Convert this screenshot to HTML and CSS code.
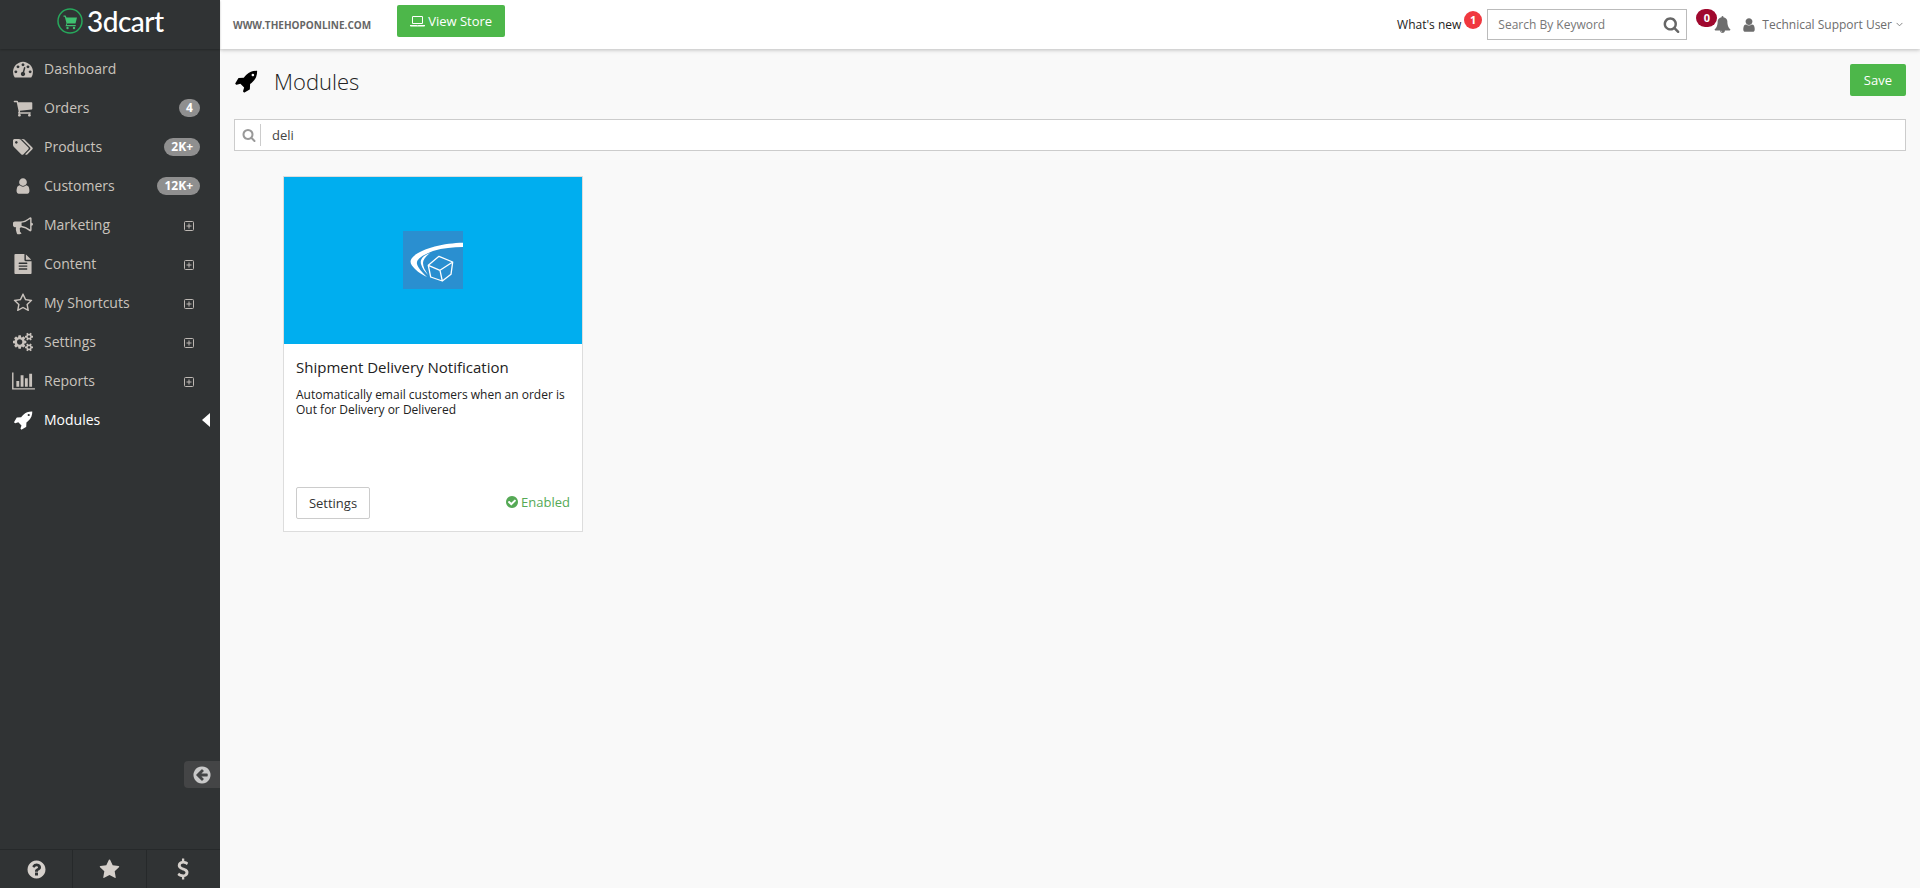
FILE: index.html
```html
<!DOCTYPE html>
<html lang="en">
<head>
<meta charset="utf-8">
<title>Modules</title>
<link rel="stylesheet" href="styles.css">
</head>
<body>
<svg class="sprite" xmlns="http://www.w3.org/2000/svg">
  <symbol id="i-dashboard" viewBox="0 0 1792 1792"><path d="M384 1152q0-53-37.500-90.500t-90.500-37.500-90.500 37.500-37.500 90.500 37.500 90.500 90.500 37.500 90.500-37.500 37.500-90.500zm192-448q0-53-37.500-90.500t-90.500-37.500-90.500 37.500-37.500 90.500 37.500 90.500 90.500 37.500 90.500-37.500 37.500-90.500zm428 481l101-382q6-26-7.500-48.500t-38.500-29.500-48 6.500-30 39.500l-101 382q-60 5-107 43.500t-63 98.500q-20 77 20 146t117 89 146-20 89-117q16-60-6-117t-72-91zm660-33q0-53-37.500-90.500t-90.500-37.500-90.500 37.500-37.500 90.500 37.500 90.500 90.500 37.500 90.500-37.500 37.500-90.500zm-640-640q0-53-37.500-90.500t-90.500-37.500-90.500 37.500-37.500 90.500 37.500 90.500 90.500 37.500 90.500-37.500 37.500-90.500zm448 192q0-53-37.500-90.500t-90.500-37.500-90.500 37.500-37.500 90.500 37.500 90.500 90.500 37.500 90.500-37.500 37.500-90.500zm320 448q0 261-141 483-19 29-54 29h-1402q-35 0-54-29-141-221-141-483 0-182 71-348t191-286 286-191 348-71 348 71 286 191 191 286 71 348z"/></symbol>
  <symbol id="i-cart" viewBox="0 0 1792 1792"><path d="M704 1536q0 52-38 90t-90 38-90-38-38-90 38-90 90-38 90 38 38 90zm896 0q0 52-38 90t-90 38-90-38-38-90 38-90 90-38 90 38 38 90zm128-1088v512q0 24-16.500 42.500t-40.500 20.500l-1044 122q13 60 13 70 0 16-24 64h920q26 0 45 19t19 45-19 45-45 19h-1024q-26 0-45-19t-19-45q0-11 8-31.500t16-36 21.500-40 15.500-29.500l-177-823h-204q-26 0-45-19t-19-45 19-45 45-19h256q16 0 28.500 6.500t19.500 15.500 13 24.500 8 26 5.500 29.500 4.500 26h1201q26 0 45 19t19 45z"/></symbol>
  <symbol id="i-tags" viewBox="0 0 1920 1792"><path d="M448 448q0-53-37.500-90.500t-90.500-37.500-90.500 37.500-37.500 90.500 37.500 90.500 90.500 37.500 90.500-37.500 37.500-90.500zm1067 576q0 53-37 90l-491 492q-39 37-91 37-53 0-90-37l-715-716q-38-37-64.500-101t-26.500-117v-416q0-52 38-90t90-38h416q53 0 117 26.500t102 64.500l715 714q37 39 37 91zm384 0q0 53-37 90l-491 492q-39 37-91 37-36 0-59-14t-53-45l470-470q37-37 37-90 0-52-37-91l-715-714q-38-38-102-64.500t-117-26.500h224q53 0 117 26.500t102 64.500l715 714q37 39 37 91z"/></symbol>
  <symbol id="i-user" viewBox="0 0 1792 1792"><path d="M1536 1399q0 109-62.500 187t-150.500 78h-854q-88 0-150.500-78t-62.500-187q0-85 8.500-160.500t31.500-152 58.500-131 94-89 134.500-34.500q131 128 313 128t313-128q76 0 134.500 34.500t94 89 58.500 131 31.500 152 8.500 160.500zm-256-887q0 159-112.500 271.500t-271.500 112.500-271.500-112.500-112.500-271.500 112.500-271.500 271.500-112.500 271.500 112.500 112.500 271.500z"/></symbol>
  <symbol id="i-bullhorn" viewBox="0 0 1792 1792"><path d="M1664 704q53 0 90.500 37.500t37.500 90.500-37.500 90.500-90.500 37.500v384q0 52-38 90t-90 38q-417-347-812-380-58 19-91 66t-31 100.500 40 92.500q-20 33-23 65.500t6 58 33.500 55 48 50 61.500 50.500q-29 58-111.500 83t-168.500 11.500-132-55.500q-7-23-29.500-87.500t-32-94.500-23-89-15-101 3.500-98.500 22-110.500h-122q-66 0-113-47t-47-113v-192q0-66 47-113t113-47h480q435 0 896-384 52 0 90 38t38 90v384zm-128 604v-954q-394 302-768 343v270q377 42 768 341z"/></symbol>
  <symbol id="i-file" viewBox="0 0 1792 1792"><path d="M1596 476q14 14 28 36h-472v-472q22 14 36 28zm-476 164h544v1056q0 40-28 68t-68 28h-1344q-40 0-68-28t-28-68v-1600q0-40 28-68t68-28h800v544q0 40 28 68t68 28zm160 736v-64q0-14-9-23t-23-9h-704q-14 0-23 9t-9 23v64q0 14 9 23t23 9h704q14 0 23-9t9-23zm0-256v-64q0-14-9-23t-23-9h-704q-14 0-23 9t-9 23v64q0 14 9 23t23 9h704q14 0 23-9t9-23zm0-256v-64q0-14-9-23t-23-9h-704q-14 0-23 9t-9 23v64q0 14 9 23t23 9h704q14 0 23-9t9-23z"/></symbol>
  <symbol id="i-star-o" viewBox="0 0 1792 1792"><path d="M1201 1004l306-297-422-62-189-382-189 382-422 62 306 297-73 421 378-199 377 199zm527-357q0 22-26 48l-363 354 86 500q1 7 1 20 0 50-41 50-19 0-40-12l-449-236-449 236q-22 12-40 12-21 0-31.500-14.500t-10.500-35.500q0-6 2-20l86-500-364-354q-25-27-25-48 0-37 56-46l502-73 225-455q19-41 49-41t49 41l225 455 502 73q56 9 56 46z"/></symbol>
  <symbol id="i-star" viewBox="0 0 1792 1792"><path d="M1728 647q0 22-26 48l-363 354 86 500q1 7 1 20 0 21-10.500 35.500t-30.500 14.500q-19 0-40-12l-449-236-449 236q-22 12-40 12-21 0-31.500-14.500t-10.500-35.500q0-6 2-20l86-500-364-354q-25-27-25-48 0-37 56-46l502-73 225-455q19-41 49-41t49 41l225 455 502 73q56 9 56 46z"/></symbol>
  <symbol id="i-cogs" viewBox="0 0 1920 1792"><path d="M896 896q0-106-75-181t-181-75-181 75-75 181 75 181 181 75 181-75 75-181zm768 512q0-52-38-90t-90-38-90 38-38 90q0 53 37.500 90.500t90.500 37.500 90.500-37.500 37.500-90.500zm0-1024q0-52-38-90t-90-38-90 38-38 90q0 53 37.500 90.500t90.500 37.500 90.500-37.500 37.500-90.500zm-384 421v185q0 10-7 19.500t-16 10.500l-155 24q-11 35-32 76 34 48 90 115 7 11 7 20 0 12-7 19-23 30-82.500 89.500t-78.500 59.500q-11 0-21-7l-115-90q-37 19-77 31-11 108-23 155-7 24-30 24h-186q-11 0-20-7.500t-10-17.500l-23-153q-34-10-75-31l-118 89q-7 7-20 7-11 0-21-8-144-133-144-160 0-9 7-19 10-14 41-53t47-61q-23-44-35-82l-152-24q-10-1-17-9.500t-7-19.500v-185q0-10 7-19.500t16-10.500l155-24q11-35 32-76-34-48-90-115-7-11-7-20 0-12 7-20 22-30 82-89t79-59q11 0 21 7l115 90q34-18 77-32 11-108 23-154 7-24 30-24h186q11 0 20 7.500t10 17.500l23 153q34 10 75 31l118-89q8-7 20-7 11 0 21 8 144 133 144 160 0 8-7 19-12 16-42 54t-45 60q23 48 34 82l152 23q10 2 17 10.500t7 19.500zm640 533v140q0 16-149 31-12 27-30 52 51 113 51 138 0 4-4 7-122 71-124 71-8 0-46-47t-52-68q-20 2-30 2t-30-2q-14 21-52 68t-46 47q-2 0-124-71-4-3-4-7 0-25 51-138-18-25-30-52-149-15-149-31v-140q0-16 149-31 13-29 30-52-51-113-51-138 0-4 4-7 4-2 35-20t59-34 30-16q8 0 46 46.500t52 67.500q20-2 30-2t30 2q51-71 92-112l6-2q4 0 124 70 4 3 4 7 0 25-51 138 17 23 30 52 149 15 149 31zm0-1024v140q0 16-149 31-12 27-30 52 51 113 51 138 0 4-4 7-122 71-124 71-8 0-46-47t-52-68q-20 2-30 2t-30-2q-14 21-52 68t-46 47q-2 0-124-71-4-3-4-7 0-25 51-138-18-25-30-52-149-15-149-31v-140q0-16 149-31 13-29 30-52-51-113-51-138 0-4 4-7 4-2 35-20t59-34 30-16q8 0 46 46.500t52 67.500q20-2 30-2t30 2q51-71 92-112l6-2q4 0 124 70 4 3 4 7 0 25-51 138 17 23 30 52 149 15 149 31z"/></symbol>
  <symbol id="i-chart" viewBox="0 0 2048 1792"><path d="M640 896v512h-256v-512h256zm384-512v1024h-256v-1024h256zm1024 1152v128h-2048v-1536h128v1408h1920zm-640-896v768h-256v-768h256zm384-384v1152h-256v-1152h256z"/></symbol>
  <symbol id="i-rocket" viewBox="0 0 1792 1792"><path d="M1504 448q0-40-28-68t-68-28-68 28-28 68 28 68 68 28 68-28 28-68zm224-288q0 249-75.500 430.500t-253.500 360.500q-81 80-195 176l-20 379q-2 16-16 26l-384 224q-7 4-16 4-12 0-23-9l-64-64q-13-14-8-32l85-276-281-281-276 85q-3 1-9 1-14 0-23-9l-64-64q-17-19-5-39l224-384q10-14 26-16l379-20q96-114 176-195 188-187 358-258t431-71q14 0 24 9.500t10 22.500z"/></symbol>
  <symbol id="i-plus" viewBox="0 0 10 10"><path fill="none" stroke="currentColor" d="M1.500.5h7a1 1 0 0 1 1 1v7a1 1 0 0 1-1 1h-7a1 1 0 0 1-1-1v-7a1 1 0 0 1 1-1zM5 2.500v5M2.500 5h5"/></symbol>
  <symbol id="i-search" viewBox="0 0 1792 1792"><path d="M1216 832q0-185-131.500-316.500t-316.500-131.500-316.500 131.500-131.500 316.500 131.500 316.500 316.500 131.500 316.500-131.500 131.500-316.500zm512 832q0 52-38 90t-90 38q-54 0-90-38l-343-342q-179 124-399 124-143 0-273.500-55.500t-225-150-150-225-55.500-273.500 55.500-273.500 150-225 225-150 273.500-55.500 273.500 55.500 225 150 150 225 55.500 273.500q0 220-124 399l343 343q37 37 37 90z"/></symbol>
  <symbol id="i-bell" viewBox="0 0 1792 1792"><path d="M912 1696q0-16-16-16-59 0-101.500-42.500t-42.500-101.500q0-16-16-16t-16 16q0 73 51.500 124.500t124.500 51.500q16 0 16-16zm816-288q0 52-38 90t-90 38h-448q0 106-75 181t-181 75-181-75-75-181h-448q-52 0-90-38t-38-90q50-42 91-88t85-119.500 74.500-158.500 50-206 19.500-260q0-152 117-282.500t307-158.500q-8-19-8-39 0-40 28-68t68-28 68 28 28 68q0 20-8 39 190 28 307 158.500t117 282.500q0 139 19.500 260t50 206 74.500 158.500 85 119.500 91 88z"/></symbol>
  <symbol id="i-check" viewBox="0 0 1792 1792"><path d="M1412 734q0-28-18-46l-91-90q-19-19-45-19t-45 19l-408 407-226-226q-19-19-45-19t-45 19l-91 90q-18 18-18 46 0 27 18 45l362 362q19 19 45 19 27 0 46-19l543-543q18-18 18-45zm252 162q0 209-103 385.500t-279.500 279.500-385.500 103-385.500-103-279.500-279.500-103-385.500 103-385.500 279.500-279.500 385.500-103 385.500 103 279.500 279.500 103 385.500z"/></symbol>
  <symbol id="i-question" viewBox="0 0 1792 1792"><path d="M1024 1376v-192q0-14-9-23t-23-9h-192q-14 0-23 9t-9 23v192q0 14 9 23t23 9h192q14 0 23-9t9-23zm256-672q0-88-55.500-163t-138.500-116-170-41q-243 0-371 213-15 24 8 42l132 100q7 6 19 6 16 0 25-12 53-68 86-92 34-24 86-24 48 0 85.500 26t37.500 59q0 38-20 61t-68 45q-63 28-115.500 86.500t-52.500 125.500v36q0 14 9 23t23 9h192q14 0 23-9t9-23q0-19 21.500-49.500t54.500-49.500q32-18 49-28.500t46-35 44.500-48 28-60.500 12.500-81zm384 192q0 209-103 385.500t-279.500 279.500-385.500 103-385.500-103-279.500-279.500-103-385.500 103-385.500 279.500-279.500 385.500-103 385.500 103 279.500 279.500 103 385.500z"/></symbol>
  <symbol id="i-back" viewBox="0 0 1792 1792"><path d="M1408 960v-128q0-26-19-45t-45-19h-502l189-189q19-19 19-45t-19-45l-91-91q-18-18-45-18t-45 18l-362 362-91 91q-18 18-18 45t18 45l91 91 362 362q18 18 45 18t45-18l91-91q18-18 18-45t-18-45l-189-189h502q26 0 45-19t19-45zm256-64q0 209-103 385.500t-279.500 279.500-385.500 103-385.500-103-279.500-279.500-103-385.500 103-385.500 279.500-279.500 385.500-103 385.500 103 279.500 279.500 103 385.500z"/></symbol>
  <symbol id="i-dollar" viewBox="0 0 1024 1792"><path d="M978 1185q0 153-99.500 263.500t-258.500 136.500v175q0 14-9 23t-23 9h-135q-13 0-22.500-9.500t-9.500-22.500v-175q-66-9-127.500-31t-101.500-44.500-74-48-46.500-37.500-17.500-18q-17-21-2-41l103-135q7-10 23-12 15-2 24 9l2 2q113 99 243 125 37 8 74 8 81 0 142.500-43t61.500-122q0-28-15-53t-33.500-42-58.500-37.500-66-32-80-32.500q-39-16-61.500-25t-61.500-26.500-62.500-31-56.500-35.500-53.500-42.500-43.500-49-35.500-58-21-66.500-8.500-78q0-138 98-242t255-134v-180q0-13 9.500-22.500t22.500-9.500h135q14 0 23 9t9 23v176q57 6 110.500 23t87 33.500 63.500 37.500 39 29 15 14q17 18 5 38l-81 146q-8 15-23 16-14 3-27-7-3-3-14.500-12t-39-26.500-58.500-32-74.500-26-85.500-11.500q-95 0-155 43t-60 111q0 26 8.500 48t29.500 41.500 39.500 33 56 31 60.500 27 70 27.500q53 20 81 31.500t76 35 75.500 42.500 62 50 53 63.500 31.500 76.500 13 94z"/></symbol>
  <symbol id="i-laptop" viewBox="0 0 1920 1792"><path fill-rule="evenodd" d="M416 1280q-66 0-113-47t-47-113v-704q0-66 47-113t113-47h1088q66 0 113 47t47 113v704q0 66-47 113t-113 47zm-32-864v704q0 13 9.500 22.500t22.500 9.500h1088q13 0 22.500-9.500t9.500-22.500v-704q0-13-9.500-22.500t-22.500-9.500h-1088q-13 0-22.500 9.500t-9.500 22.500zm1376 992h160v96q0 40-47 68t-113 28h-1600q-66 0-113-28t-47-68v-96h160zm-720 96q16 0 16-16t-16-16h-160q-16 0-16 16t16 16z"/></symbol>
</svg>

<div class="app">
  <aside class="sidebar">
    <div class="logo">
      <svg class="logo-mark" viewBox="0 0 26 26">
        <circle class="logo-ring" cx="13" cy="13" r="12"/>
        <path class="logo-cart" d="M6.500 7.500h2l1 2h10.500l-1.500 6h-8.200l-.6 1.500h9v1.300H8.500l1-3-1.700-6.500H6.500z"/>
        <circle class="logo-cart" cx="10.500" cy="20" r="1.200"/>
        <circle class="logo-cart" cx="17" cy="20" r="1.200"/>
      </svg>
      <span class="logo-text">3dcart</span>
    </div>
    <nav class="menu">
      <a class="menu-item"><svg class="menu-icon"><use href="#i-dashboard"/></svg><span class="menu-label">Dashboard</span></a>
      <a class="menu-item"><svg class="menu-icon"><use href="#i-cart"/></svg><span class="menu-label">Orders</span><span class="count">4</span></a>
      <a class="menu-item"><svg class="menu-icon"><use href="#i-tags"/></svg><span class="menu-label">Products</span><span class="count">2K+</span></a>
      <a class="menu-item"><svg class="menu-icon menu-icon-sm"><use href="#i-user"/></svg><span class="menu-label">Customers</span><span class="count">12K+</span></a>
      <a class="menu-item"><svg class="menu-icon"><use href="#i-bullhorn"/></svg><span class="menu-label">Marketing</span><svg class="expand"><use href="#i-plus"/></svg></a>
      <a class="menu-item"><svg class="menu-icon"><use href="#i-file"/></svg><span class="menu-label">Content</span><svg class="expand"><use href="#i-plus"/></svg></a>
      <a class="menu-item"><svg class="menu-icon"><use href="#i-star-o"/></svg><span class="menu-label">My Shortcuts</span><svg class="expand"><use href="#i-plus"/></svg></a>
      <a class="menu-item"><svg class="menu-icon"><use href="#i-cogs"/></svg><span class="menu-label">Settings</span><svg class="expand"><use href="#i-plus"/></svg></a>
      <a class="menu-item"><svg class="menu-icon menu-icon-lg"><use href="#i-chart"/></svg><span class="menu-label">Reports</span><svg class="expand"><use href="#i-plus"/></svg></a>
      <a class="menu-item menu-item-active"><svg class="menu-icon"><use href="#i-rocket"/></svg><span class="menu-label">Modules</span><span class="active-arrow"></span></a>
    </nav>
    <div class="collapse-tab"><svg class="collapse-icon"><use href="#i-back"/></svg></div>
    <div class="side-foot">
      <a class="foot-cell"><svg class="foot-q"><use href="#i-question"/></svg></a>
      <a class="foot-cell foot-mid"><svg class="foot-star"><use href="#i-star"/></svg></a>
      <a class="foot-cell"><svg class="foot-dollar"><use href="#i-dollar"/></svg></a>
    </div>
  </aside>

  <div class="column">
    <header class="topbar">
      <span class="domain">WWW.THEHOPONLINE.COM</span>
      <a class="btn-store"><svg class="laptop"><use href="#i-laptop"/></svg>View Store</a>
      <div class="top-right">
        <span class="whatsnew">What's new<span class="dot dot-red">1</span></span>
        <div class="top-search"><span class="top-search-text">Search By Keyword</span><svg class="top-search-icon"><use href="#i-search"/></svg></div>
        <span class="bell-wrap"><span class="dot dot-wine">0</span><svg class="bell"><use href="#i-bell"/></svg></span>
        <svg class="user-icon"><use href="#i-user"/></svg>
        <span class="user-name">Technical Support User</span>
        <svg class="chev" viewBox="0 0 8 5"><path d="M.7.7 4 4l3.300-3.300"/></svg>
      </div>
    </header>

    <main class="content">
      <div class="title-row">
        <svg class="title-icon"><use href="#i-rocket"/></svg>
        <h1 class="title">Modules</h1>
        <a class="btn-save">Save</a>
      </div>
      <div class="filter">
        <svg class="filter-icon"><use href="#i-search"/></svg>
        <span class="filter-sep"></span>
        <span class="filter-text">deli</span>
      </div>
      <article class="card">
        <div class="card-banner">
          <svg class="card-logo" viewBox="0 0 60 58">
            <rect class="card-logo-bg" width="60" height="58"/>
            <path class="card-swoosh" d="M60 11.700C40 12 16 18 9 27c-3 4-1 7 3 11 4 4 8 6 12 8-5-5-9-9-10-13-1-5 6-9 16-13 10-3 20-4 30-4z"/>
            <path class="card-swoosh" d="M27 22c-8 3-10 7-9 11 1 4 4 8 7 11-3-5-5-8-5-12 0-3 3-7 7-10z"/>
            <path class="card-cube" d="M36 25.300 49.700 31 48 43.300 39.300 50l-11.600-4-2.400-11.700zM25.300 34.300 37 39.300 49.700 31M37 39.300l2.300 10.700"/>
          </svg>
        </div>
        <div class="card-body">
          <h2 class="card-title">Shipment Delivery Notification</h2>
          <p class="card-desc">Automatically email customers when an order is Out for Delivery or Delivered</p>
          <div class="card-foot">
            <a class="btn-settings">Settings</a>
            <span class="status"><svg class="status-icon"><use href="#i-check"/></svg>Enabled</span>
          </div>
        </div>
      </article>
    </main>
  </div>
</div>
</body>
</html>
```
FILE: styles.css
```css
* { box-sizing: border-box; }
html, body { margin: 0; height: 100%; }
body {
  font-family: "Open Sans", "Liberation Sans", sans-serif;
  background: #f9f9f9;
  color: #222;
  overflow: hidden;
}
a { color: inherit; text-decoration: none; }
svg { fill: currentColor; display: block; flex: none; }
.sprite { display: none; }

.app { display: flex; height: 888px; }

/* Sidebar */
.sidebar {
  position: relative;
  width: 220px;
  flex: none;
  display: flex;
  flex-direction: column;
  background: #303334;
  color: #c9c3bd;
}
.logo {
  height: 49px;
  display: flex;
  align-items: center;
  padding: 0 0 8px 57px;
  box-shadow: 0 1px 2px rgba(0, 0, 0, .25);
  flex: none;
}
.logo-mark { width: 26px; height: 26px; }
.logo-ring { fill: none; stroke: #27a85c; stroke-width: 1.500; }
.logo-cart { fill: #3fc070; }
.logo-text {
  margin-left: 4px;
  font-family: Lato, sans-serif;
  font-size: 28px;
  font-weight: 500;
  letter-spacing: -.5px;
  line-height: 26px;
  color: #fff;
}
.menu { flex: 1; }
.menu-item {
  height: 39px;
  display: flex;
  align-items: center;
  padding-left: 13px;
  font-size: 14px;
}
.menu-icon { width: 20px; height: 20px; margin-right: 11px; }
.menu-icon-sm { width: 18px; height: 18px; margin: 0 12px 0 1px; }
.menu-icon-lg { width: 23px; height: 20px; margin: 0 9px 0 -1px; }
.menu-label { flex: 1; }
.menu-item-active { color: #fff; font-weight: 500; }
.count {
  height: 18px;
  min-width: 21px;
  margin-right: 20px;
  padding: 0 7px;
  border-radius: 9px;
  background: #8f8f8f;
  color: #fff;
  font-size: 12px;
  font-weight: 700;
  line-height: 18px;
  text-align: center;
}
.expand { width: 10px; height: 10px; margin: 3px 26px 0 0; color: #bdb8b3; }
.active-arrow {
  width: 0;
  height: 0;
  margin-right: 10px;
  border-style: solid;
  border-width: 7px 8px 7px 0;
  border-color: transparent #fff transparent transparent;
}
.collapse-tab {
  position: absolute;
  top: 761px;
  right: 0;
  width: 36px;
  height: 27px;
  display: flex;
  align-items: center;
  justify-content: center;
  background: #444546;
  border-radius: 4px 0 0 4px;
  color: #c9c9c9;
}
.collapse-icon { width: 20px; height: 20px; }
.side-foot {
  height: 39px;
  display: flex;
  flex: none;
  padding-right: 1px;
  border-top: 1px solid #26292a;
  color: #d5d0cb;
}
.foot-cell {
  flex: 1;
  display: flex;
  align-items: center;
  justify-content: center;
}
.foot-mid {
  border-left: 1px solid #26292a;
  border-right: 1px solid #26292a;
}
.foot-q { width: 21px; height: 21px; }
.foot-star { width: 21px; height: 21px; }
.foot-dollar { width: 12px; height: 22px; }

/* Top bar */
.column { flex: 1; min-width: 0; display: flex; flex-direction: column; }
.topbar {
  height: 49px;
  flex: none;
  display: flex;
  align-items: center;
  padding: 0 17px 0 13px;
  background: #fff;
  box-shadow: 0 1px 4px rgba(0, 0, 0, .25);
}
.domain { font-size: 10px; font-weight: 700; color: #666; }
.btn-store {
  height: 32px;
  margin: -7px 0 0 26px;
  padding: 0 13px 0 13px;
  display: flex;
  align-items: center;
  background: #4db74a;
  border-radius: 2px;
  color: #fff;
  font-size: 13px;
  font-weight: 500;
}
.laptop { width: 15px; height: 14px; margin-right: 3px; }
.top-right { margin-left: auto; display: flex; align-items: center; }
.whatsnew {
  position: relative;
  margin-right: 26px;
  margin-top: -1px;
  font-size: 12px;
  color: #222;
}
.dot {
  position: absolute;
  height: 18px;
  border-radius: 9px;
  color: #fff;
  font-size: 11px;
  font-weight: 700;
  line-height: 18px;
  text-align: center;
}
.dot-red { top: -5px; left: 67px; width: 18px; background: #f0383f; }
.dot-wine { top: -7px; left: 0; width: 21px; background: #a0082e; }
.top-search {
  width: 200px;
  height: 31px;
  display: flex;
  align-items: center;
  justify-content: space-between;
  padding: 0 6px 0 10px;
  background: #fff;
  border: 1px solid #bbb;
  color: #777;
  font-size: 12px;
}
.top-search-icon { width: 17px; height: 17px; color: #666; }
.bell-wrap {
  position: relative;
  width: 35px;
  height: 18px;
  margin-left: 9px;
  color: #6d6d6d;
}
.bell { position: absolute; left: 18px; top: 0; width: 17px; height: 17px; }
.user-icon { width: 16px; height: 16px; margin-left: 10px; color: #6d6d6d; }
.user-name { margin-left: 5px; font-size: 12px; color: #6d6d6d; }
.chev { width: 7px; height: 5px; margin-left: 4px; fill: none; stroke: #777; stroke-width: 1; }

/* Content */
.content { flex: 1; padding: 15px 14px 0 14px; }
.title-row { height: 32px; display: flex; align-items: center; }
.title-icon { width: 24px; height: 24px; margin-top: 2px; color: #000; }
.title {
  margin: 2px 0 0 16px;
  font-size: 22px;
  font-weight: 300;
  color: #222;
}
.btn-save {
  margin-left: auto;
  height: 32px;
  padding: 0 14px;
  display: flex;
  align-items: center;
  background: #4db74a;
  border-radius: 2px;
  color: #fff;
  font-size: 13px;
}
.filter {
  height: 32px;
  margin-top: 23px;
  display: flex;
  align-items: center;
  background: #fff;
  border: 1px solid #ccc;
  padding-left: 7px;
}
.filter-icon { width: 14px; height: 14px; color: #999; }
.filter-sep { width: 1px; height: 22px; margin: 0 11px 0 4px; background: #ccc; }
.filter-text { font-size: 13px; color: #444; }

/* Card */
.card {
  width: 300px;
  height: 356px;
  margin: 25px 0 0 49px;
  display: flex;
  flex-direction: column;
  background: #fff;
  border: 1px solid #ddd;
}
.card-banner {
  height: 167px;
  flex: none;
  display: flex;
  align-items: center;
  justify-content: center;
  padding-bottom: 2px;
  background: #00aeef;
}
.card-logo { width: 60px; height: 58px; }
.card-logo-bg { fill: #2a8fd0; }
.card-swoosh { fill: #fff; }
.card-cube { fill: none; stroke: #fff; stroke-width: 1.300; stroke-linejoin: round; }
.card-body {
  flex: 1;
  display: flex;
  flex-direction: column;
  padding: 13px 12px 12px 12px;
}
.card-title {
  margin: 0;
  font-size: 15px;
  font-weight: 400;
  line-height: 20px;
  color: #222;
}
.card-desc {
  margin: 10px 0 0;
  font-size: 12px;
  line-height: 15px;
  color: #222;
}
.card-foot {
  margin-top: auto;
  display: flex;
  align-items: center;
  justify-content: space-between;
}
.btn-settings {
  width: 74px;
  height: 32px;
  display: flex;
  align-items: center;
  justify-content: center;
  border: 1px solid #ccc;
  border-radius: 2px;
  font-size: 13px;
  color: #333;
}
.status {
  display: flex;
  align-items: center;
  margin-top: -2px;
  font-size: 13px;
  color: #55a955;
}
.status-icon { width: 14px; height: 14px; margin-right: 2px; }
```
